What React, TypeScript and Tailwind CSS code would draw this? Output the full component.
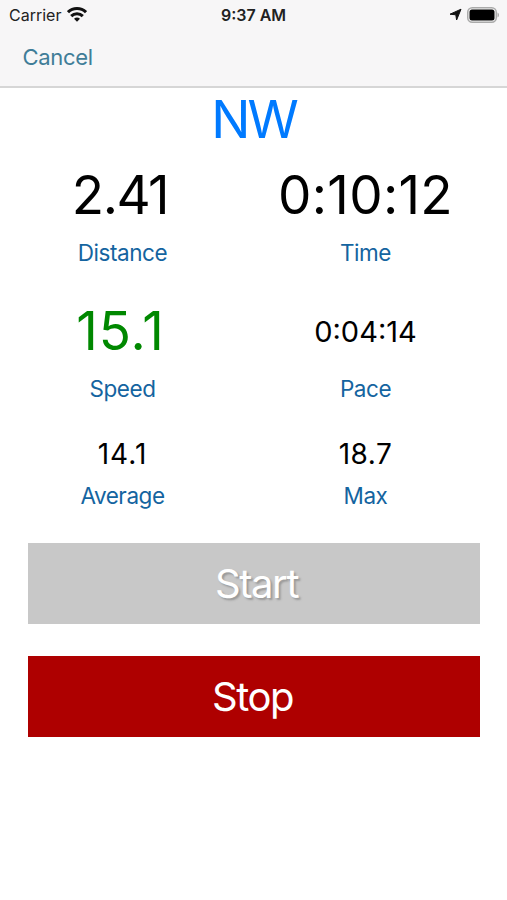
interface MetricProps {
  value: string
  label: string
  valueClass: string
}

function Metric({ value, label, valueClass }: MetricProps) {
  return (
    <div className="flex w-[243px] flex-col items-center whitespace-nowrap">
      <div className={`flex items-center justify-center ${valueClass}`}>{value}</div>
      <div className="text-[22.5px] leading-7 tracking-[-0.02em] text-[#1464a0]">{label}</div>
    </div>
  )
}

function WifiIcon() {
  return (
    <svg className="h-[15px] w-[20px]" viewBox="0 0 20 15" fill="none" stroke="#111" strokeWidth="3">
      <path d="M1 5.2a12.8 12.8 0 0 1 18 0" />
      <path d="M4.2 9.1a8.2 8.2 0 0 1 11.6 0" />
      <path d="M10 14.8 7 11.8a4.4 4.4 0 0 1 6 0z" fill="#111" stroke="none" />
    </svg>
  )
}

function StatusBar() {
  return (
    <div className="grid h-[29px] grid-cols-3 items-center text-[16px] text-[#222]">
      <div className="flex items-center gap-1.5 pl-[9px]">
        <span>Carrier</span>
        <WifiIcon />
      </div>
      <div className="text-center font-semibold">9:37 AM</div>
      <div className="flex items-center justify-end gap-[5px] pr-[7px]">
        <svg className="h-[13px] w-[13px]" viewBox="0 0 13 13" fill="#111" stroke="#111" strokeLinejoin="round">
          <path d="M12 1.2 7.6 12 6.800 6.800 1 6.200z" />
        </svg>
        <svg className="h-4 w-[33px]" viewBox="0 0 33 16">
          <rect x="0.75" y="0.75" width="28.5" height="14.5" rx="4.5" fill="none" stroke="#aaa" strokeWidth="1.5" />
          <rect x="2.500" y="2.500" width="25" height="11" rx="2.500" fill="#000" />
          <path d="M30.500 5.500c2 .8 2 4.200 0 5z" fill="#aaa" />
        </svg>
      </div>
    </div>
  )
}

export default function App() {
  return (
    <div className="h-[900px] w-[507px] overflow-hidden bg-white font-[Inter,sans-serif]">
      <header className="h-[88px] border-b-2 border-[#d6d6d6] bg-[#f7f6f7]">
        <StatusBar />
        <button className="ml-[22.5px] mt-[14px] block text-[22px] leading-7 tracking-[-0.015em] text-[#407d98]">
          Cancel
        </button>
      </header>

      <div className="flex h-16 items-center justify-center text-[52px] tracking-[-0.055em] text-[#007aff]">NW</div>

      <div className="flex pl-px">
        <Metric value="2.41" label="Distance" valueClass="h-[87px] pr-[5px] text-[53px] tracking-[-1.5px]" />
        <Metric value="0:10:12" label="Time" valueClass="h-[87px] text-[53px] tracking-[0.3px]" />
      </div>
      <div className="mt-[21px] flex pl-px">
        <Metric value="15.1" label="Speed" valueClass="h-[87px] pr-1 text-[53px] tracking-[1px] text-[#080]" />
        <Metric value="0:04:14" label="Pace" valueClass="h-[87px] text-[29px]" />
      </div>
      <div className="mt-[22px] flex pl-px">
        <Metric value="14.1" label="Average" valueClass="h-[57px] text-[28px] tracking-[1px]" />
        <Metric value="18.7" label="Max" valueClass="h-[57px] text-[28px] tracking-[0.5px]" />
      </div>

      <div className="mr-[27px] ml-7 mt-[33px] flex flex-col gap-8 text-[40px] tracking-[-0.035em] text-white">
        <button className="h-[81px] bg-[#c8c8c8] pl-[5px] [text-shadow:2px_2px_2px_#999]">Start</button>
        <button className="h-[81px] bg-[#ae0000] pr-[3px]">Stop</button>
      </div>
    </div>
  )
}
